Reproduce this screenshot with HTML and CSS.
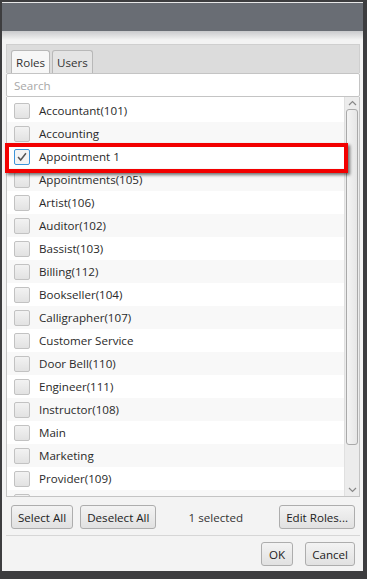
FILE: index.html
```html
<!DOCTYPE html>
<html>
<head>
<meta charset="utf-8">
<link rel="stylesheet" href="styles.css">
</head>
<body>
<div class="window">
  <div class="titlebar"></div>
  <div class="fade"></div>
  <div class="body">
    <div class="tabpane">
      <div class="tabs">
        <div class="tab active">Roles</div>
        <div class="tab">Users</div>
      </div>
      <div class="search">Search</div>
      <div class="listwrap">
        <div class="list">
          <div class="row"><span class="cb"></span>Accountant(101)</div>
          <div class="row alt"><span class="cb"></span>Accounting</div>
          <div class="row"><span class="cb checked"><svg viewBox="0 0 16 16" width="16" height="16"><path d="M3.5 8 L6.5 11.5 L12.5 3.8" fill="none" stroke="#555" stroke-width="1.7"/></svg></span>Appointment 1</div>
          <div class="row alt"><span class="cb"></span>Appointments(105)</div>
          <div class="row"><span class="cb"></span>Artist(106)</div>
          <div class="row alt"><span class="cb"></span>Auditor(102)</div>
          <div class="row"><span class="cb"></span>Bassist(103)</div>
          <div class="row alt"><span class="cb"></span>Billing(112)</div>
          <div class="row"><span class="cb"></span>Bookseller(104)</div>
          <div class="row alt"><span class="cb"></span>Calligrapher(107)</div>
          <div class="row"><span class="cb"></span>Customer Service</div>
          <div class="row alt"><span class="cb"></span>Door Bell(110)</div>
          <div class="row"><span class="cb"></span>Engineer(111)</div>
          <div class="row alt"><span class="cb"></span>Instructor(108)</div>
          <div class="row"><span class="cb"></span>Main</div>
          <div class="row alt"><span class="cb"></span>Marketing</div>
          <div class="row"><span class="cb"></span>Provider(109)</div>
          <div class="row alt"><span class="cb"></span></div>
        </div>
        <div class="scrollbar">
          <div class="arrow"><svg width="9" height="6" viewBox="0 0 9 6"><path d="M1 5 L4.5 1.5 L8 5" fill="none" stroke="#888" stroke-width="1.2"/></svg></div>
          <div class="track"><div class="thumb"></div></div>
          <div class="arrow"><svg width="9" height="6" viewBox="0 0 9 6"><path d="M1 1 L4.5 4.5 L8 1" fill="none" stroke="#888" stroke-width="1.2"/></svg></div>
        </div>
        <div class="highlight"></div>
      </div>
    </div>
    <div class="actions">
      <button class="btn">Select All</button>
      <button class="btn">Deselect All</button>
      <span class="count">1 selected</span>
      <button class="btn">Edit Roles...</button>
    </div>
    <div class="sep"></div>
    <div class="footer">
      <button class="btn ok">OK</button>
      <button class="btn">Cancel</button>
    </div>
  </div>
</div>
</body>
</html>
```
FILE: styles.css
```css
html, body {
  margin: 0;
  padding: 0;
}
body {
  width: 367px;
  height: 579px;
  background: #3d3d3f;
  font-family: "Open Sans", "Noto Sans", sans-serif;
  font-size: 11.6px;
  color: #222;
  overflow: hidden;
}
.window {
  margin: 2px 0 0 2px;
  width: 361px;
  height: 569px;
  background: #f3f3f3;
  border-top: 1px solid #e8e8e8;
  box-sizing: border-box;
  display: flex;
  flex-direction: column;
}
.titlebar {
  height: 28px;
  background: #696d74;
}
.fade {
  height: 9px;
  background: linear-gradient(#c9cacc, #f3f3f3);
}
.body {
  padding: 4px 3px 0 4px;
  display: flex;
  flex-direction: column;
  flex: 1;
}
.tabpane {
  display: flex;
  flex-direction: column;
}
.tabs {
  height: 29px;
  background: #dcdcdc;
  border: 1px solid #cfcfcf;
  border-bottom: none;
  box-sizing: border-box;
  display: flex;
  align-items: flex-end;
  padding-left: 4px;
  gap: 2px;
}
.tab {
  height: 23px;
  padding: 0 4px;
  border: 1px solid #b8b8b8;
  border-bottom: none;
  border-radius: 3px 3px 0 0;
  background: #e4e4e4;
  display: flex;
  align-items: center;
  box-sizing: border-box;
  color: #333;
}
.tab.active {
  background: #f7f7f7;
}
.search {
  height: 24px;
  background: #fff;
  border: 1px solid #c4c4c4;
  border-radius: 2px;
  box-sizing: border-box;
  color: #a8a8a8;
  padding-left: 7px;
  display: flex;
  align-items: center;
}
.listwrap {
  position: relative;
  height: 400px;
  border: 1px solid #c4c4c4;
  border-top: none;
  background: #fff;
  box-sizing: border-box;
  display: flex;
  overflow: visible;
}
.list {
  flex: 1;
  padding-top: 2px;
  overflow: hidden;
}
.row {
  height: 23px;
  display: flex;
  align-items: center;
  padding-left: 7px;
  color: #2a2a2a;
}
.row.alt {
  background: #f8f8f8;
}
.cb {
  width: 16px;
  height: 16px;
  box-sizing: border-box;
  border: 1px solid #c2c2c2;
  border-radius: 2px;
  background: linear-gradient(#f2f2f2, #e2e2e2);
  margin-right: 9px;
  display: inline-flex;
  align-items: center;
  justify-content: center;
  flex-shrink: 0;
}
.cb.checked {
  border-color: #3d94d9;
  background: #f4f4f4;
}
.cb svg {
  display: block;
}
.scrollbar {
  width: 14px;
  background: #ececec;
  border-left: 1px solid #e0e0e0;
  display: flex;
  flex-direction: column;
}
.arrow {
  height: 12px;
  display: flex;
  align-items: center;
  justify-content: center;
}
.track {
  flex: 1;
  position: relative;
}
.thumb {
  margin: 0 1px;
  height: 336px;
  border: 1px solid #a9a9a9;
  border-radius: 3px;
  background: linear-gradient(90deg, #f4f4f4, #e6e6e6);
  box-sizing: border-box;
}
.highlight {
  position: absolute;
  left: -2px;
  top: 46px;
  width: 343px;
  height: 30px;
  border: 4px solid #f20000;
  box-sizing: border-box;
  box-shadow: 2px 2px 3px rgba(0, 0, 0, 0.55);
  pointer-events: none;
}
.actions {
  display: flex;
  align-items: center;
  margin-top: 8px;
  padding: 0 5px;
  gap: 7px;
}
.btn {
  height: 24px;
  font-family: "Open Sans", "Noto Sans", sans-serif;
  font-size: 11.6px;
  color: #222;
  border: 1px solid #adadad;
  border-radius: 3px;
  background: linear-gradient(#f3f3f3, #e1e1e1);
  padding: 0 6px;
  margin: 0;
}
.count {
  flex: 1;
  text-align: center;
  color: #333;
  padding-right: 4px;
}
.sep {
  height: 1px;
  background: #d6d6d6;
  margin-top: 6px;
}
.footer {
  display: flex;
  justify-content: flex-end;
  padding: 6px 5px 0 0;
  gap: 12px;
}
.btn.ok {
  padding: 0 7px;
}
```
